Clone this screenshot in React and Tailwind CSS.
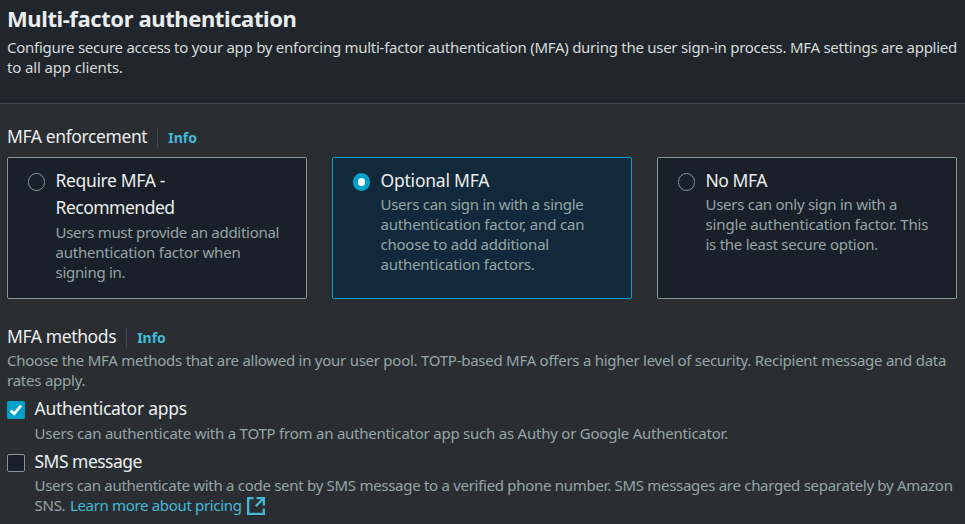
import React from "react";

function Lines({ lines }) {
  return lines.map(([text, tracking], i) => (
    <span key={i} className={`block w-max ${tracking}`}>
      {text}
    </span>
  ));
}

function SectionTitle({ title, tracking }) {
  return (
    <div className="flex h-5 items-center">
      <h2 className={`-mt-[3.5px] text-[17.5px] leading-5 text-[#eaeded] ${tracking}`}>{title}</h2>
      <span className="ml-2.5 h-5 w-px bg-[#414750]" />
      <a className="ml-2.5 text-[14px] leading-5 font-bold text-[#44b9d6]">Info</a>
    </div>
  );
}

function Radio({ checked }) {
  return checked ? (
    <span className="mt-1.5 flex size-[17.5px] shrink-0 items-center justify-center rounded-full bg-[#00a1c9]">
      <span className="size-[7.5px] rounded-full bg-white" />
    </span>
  ) : (
    <span className="mt-1.5 size-[17.5px] shrink-0 rounded-full border border-[#879596] bg-[#1a2029]" />
  );
}

function Tile({ title, lines, checked }) {
  return (
    <div
      className={`flex h-[142px] w-[300px] rounded-[2px] border pt-[9px] pl-[19.75px] ${
        checked ? "border-[#00a1c9] bg-[#12293b]" : "border-[#879596] bg-[#1a2029]"
      }`}
    >
      <Radio checked={checked} />
      <div className="ml-[10.25px]">
        <div className="text-[17.5px] leading-[27px] text-[#eaeded]">
          <Lines lines={title} />
        </div>
        <div className={`text-[15px] leading-5 text-[#95a5a6] ${title.length > 1 ? "mt-px" : "mt-0"}`}>
          <Lines lines={lines} />
        </div>
      </div>
    </div>
  );
}

export default function App() {
  return (
    <div className="h-[524px] w-[965px] overflow-hidden bg-[#2a2e33] font-['Noto_Sans',sans-serif]">
      <header className="h-[104px] border-b border-[#414750] bg-[#21252c] pt-[5px] pl-[7px]">
        <h1 className="text-[22px] leading-[26px] font-bold tracking-[-0.4px] text-[#eaeded]">
          Multi-factor authentication
        </h1>
        <div className="mt-1.5 text-[15px] leading-5 text-[#d5dbdb]">
          <Lines
            lines={[
              ["Configure secure access to your app by enforcing multi-factor authentication (MFA) during the user sign-in process. MFA settings are applied", "tracking-[-0.267px]"],
              ["to all app clients.", "tracking-[-0.14px]"],
            ]}
          />
        </div>
      </header>
      <main className="px-[7px] pt-6">
        <SectionTitle title="MFA enforcement" tracking="tracking-[-0.39px]" />
        <div className="mt-[9px] flex gap-[25px]">
          <Tile
            title={[["Require MFA -", "tracking-[-0.35px]"], ["Recommended", "tracking-[-0.5px]"]]}
            lines={[
              ["Users must provide an additional", "tracking-[-0.29px]"],
              ["authentication factor when", "tracking-[-0.22px]"],
              ["signing in.", "tracking-[-0.3px]"],
            ]}
          />
          <Tile
            checked
            title={[["Optional MFA", "tracking-[-0.22px]"]]}
            lines={[
              ["Users can sign in with a single", "tracking-[-0.28px]"],
              ["authentication factor, and can", "tracking-[-0.18px]"],
              ["choose to add additional", "tracking-[-0.23px]"],
              ["authentication factors.", "tracking-[-0.22px]"],
            ]}
          />
          <Tile
            title={[["No MFA", "tracking-[-0.45px]"]]}
            lines={[
              ["Users can only sign in with a", "tracking-[-0.27px]"],
              ["single authentication factor. This", "tracking-[-0.15px]"],
              ["is the least secure option.", "tracking-[-0.26px]"],
            ]}
          />
        </div>
        <div className="mt-[29px]">
          <SectionTitle title="MFA methods" tracking="tracking-[-0.39px]" />
        </div>
        <div className="mt-0.5 text-[15px] leading-5 text-[#95a5a6]">
          <Lines
            lines={[
              ["Choose the MFA methods that are allowed in your user pool. TOTP-based MFA offers a higher level of security. Recipient message and data", "tracking-[-0.26px]"],
              ["rates apply.", "tracking-[-0.23px]"],
            ]}
          />
        </div>
        <div className="mt-1.5 flex">
          <span className="mt-[5px] flex size-[18px] items-center justify-center rounded-[2px] bg-[#00a1c9]">
            <svg width="14" height="14" viewBox="0 0 14 14" fill="none" stroke="#fff" strokeWidth="2.7">
              <path d="M1.6 7.4 5.2 10.8 12 2.6" />
            </svg>
          </span>
          <div className="-mt-px ml-[9.5px]">
            <div className="text-[17.5px] leading-[27px] tracking-[-0.28px] text-[#eaeded]">Authenticator apps</div>
            <div className="mt-px text-[15px] leading-5 text-[#95a5a6]">
              <Lines lines={[["Users can authenticate with a TOTP from an authenticator app such as Authy or Google Authenticator.", "tracking-[-0.23px]"]]} />
            </div>
          </div>
        </div>
        <div className="mt-1.5 flex">
          <span className="mt-[5px] size-[18px] rounded-[2px] border border-[#879596] bg-[#1a2029]" />
          <div className="-mt-px ml-[9.5px]">
            <div className="text-[17.5px] leading-[27px] tracking-[-0.52px] text-[#eaeded]">SMS message</div>
            <div className="text-[15px] leading-5 text-[#95a5a6]">
              <Lines lines={[["Users can authenticate with a code sent by SMS message to a verified phone number. SMS messages are charged separately by Amazon", "tracking-[-0.29px]"]]} />
              <div className="flex">
                <span className="tracking-[-0.25px]">SNS.</span>
                <a className="ml-[4.5px] tracking-[-0.33px] text-[#44b9d6]">Learn more about pricing</a>
                <svg className="mt-0.5 ml-[5.5px]" width="18" height="18" viewBox="0 0 18 18" fill="none" stroke="#44b9d6" strokeWidth="2.3">
                  <path d="M6.5 1.15H1.15v15.7h15.7v-5.4M9.5 1.15h7.35V8.5M16.8 1.2 8.7 9.3" />
                </svg>
              </div>
            </div>
          </div>
        </div>
      </main>
    </div>
  );
}
